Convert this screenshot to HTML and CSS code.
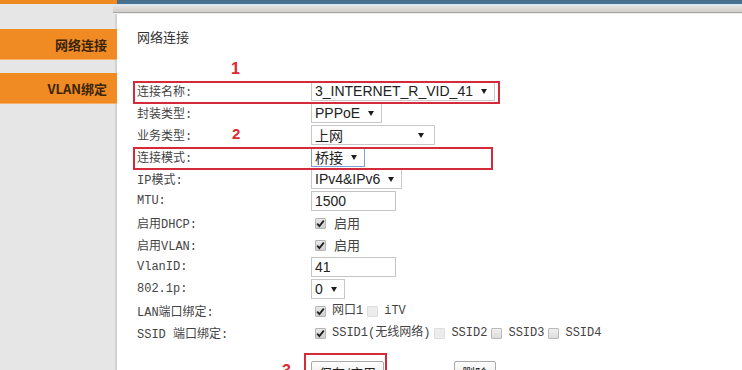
FILE: index.html
```html
<!DOCTYPE html>
<html lang="zh-CN">
<head>
<meta charset="utf-8">
<title>网络连接</title>
<link rel="stylesheet" href="styles.css">
</head>
<body>
<div class="page">
  <aside class="sidebar">
    <div class="side-top"></div>
    <nav class="side-nav">
      <div class="side-item">网络连接</div>
      <div class="side-item">VLAN绑定</div>
    </nav>
  </aside>
  <main class="main">
    <div class="topbar">
      <div class="topbar-blue"></div>
      <div class="topbar-grad"></div>
    </div>
    <div class="content">
      <h1 class="title">网络连接</h1>
      <div class="form-wrap">
        <div class="form">
          <div class="lbl">连接名称:</div>
          <div class="ctl"><span class="sel">3_INTERNET_R_VID_41<i class="caret"></i></span></div>

          <div class="lbl">封装类型:</div>
          <div class="ctl"><span class="sel">PPPoE<i class="caret"></i></span></div>

          <div class="lbl">业务类型:</div>
          <div class="ctl"><span class="sel sel-wide cjk">上网<i class="caret"></i></span></div>

          <div class="lbl">连接模式:</div>
          <div class="ctl"><span class="sel sel-focus cjk">桥接<i class="caret"></i></span></div>

          <div class="lbl">IP模式:</div>
          <div class="ctl"><span class="sel">IPv4&amp;IPv6<i class="caret"></i></span></div>

          <div class="lbl">MTU:</div>
          <div class="ctl"><span class="inp">1500</span></div>

          <div class="lbl">启用DHCP:</div>
          <div class="ctl"><span class="cb on"><svg viewBox="0 0 11 11" width="11" height="11"><path d="M2.2 5.6 L4.4 8 L8.8 2.6" /></svg></span><span class="cb-text sans">启用</span></div>

          <div class="lbl">启用VLAN:</div>
          <div class="ctl"><span class="cb on"><svg viewBox="0 0 11 11" width="11" height="11"><path d="M2.2 5.6 L4.4 8 L8.8 2.6" /></svg></span><span class="cb-text sans">启用</span></div>

          <div class="lbl">VlanID:</div>
          <div class="ctl"><span class="inp">41</span></div>

          <div class="lbl">802.1p:</div>
          <div class="ctl"><span class="sel">0<i class="caret"></i></span></div>

          <div class="lbl">LAN端口绑定:</div>
          <div class="ctl"><span class="cb on"><svg viewBox="0 0 11 11" width="11" height="11"><path d="M2.2 5.6 L4.4 8 L8.8 2.6" /></svg></span><span class="cb-text">网口1</span><span class="cb off dis"></span><span class="cb-text">iTV</span></div>

          <div class="lbl">SSID 端口绑定:</div>
          <div class="ctl"><span class="cb on"><svg viewBox="0 0 11 11" width="11" height="11"><path d="M2.2 5.6 L4.4 8 L8.8 2.6" /></svg></span><span class="cb-text">SSID1(无线网络)</span><span class="cb off dis"></span><span class="cb-text">SSID2</span><span class="cb off"></span><span class="cb-text">SSID3</span><span class="cb off"></span><span class="cb-text">SSID4</span></div>
        </div>

        <div class="actions">
          <button class="btn" type="button">保存/应用</button>
          <button class="btn" type="button">删除</button>
        </div>

        <div class="mark mark-box box1"></div>
        <div class="mark mark-num num1">1</div>
        <div class="mark mark-num num2">2</div>
        <div class="mark mark-box box2"></div>
        <div class="mark mark-box box3"></div>
        <div class="mark mark-num num3">3</div>
      </div>
    </div>
  </main>
</div>
</body>
</html>
```
FILE: styles.css
```css
* { box-sizing: border-box; }

html, body {
  margin: 0;
  padding: 0;
  background: #fff;
}

body {
  width: 742px;
  height: 370px;
  overflow: hidden;
  font-family: "Liberation Sans", "Noto Sans CJK SC", sans-serif;
  color: #333;
}

.page {
  display: flex;
  height: 370px;
}

/* ---------- sidebar ---------- */
.sidebar {
  width: 117px;
  flex: none;
  background: #e6e6e6;
  box-shadow: inset -2px 0 0 #d3d3d3;
}

.side-top {
  height: 4px;
  background: #ef8a1f;
}

.side-nav {
  display: flex;
  flex-direction: column;
  gap: 13px;
  padding-top: 25px;
}

.side-item {
  height: 31px;
  line-height: 31px;
  background: #f08a22;
  border-bottom: 1px solid #f6b16a;
  text-align: right;
  padding-right: 10px;
  font-family: "Noto Sans CJK SC", sans-serif;
  font-weight: bold;
  font-size: 13px;
  color: #3b2408;
}

/* ---------- main ---------- */
.main {
  flex: 1;
  min-width: 0;
}

.topbar-blue {
  height: 4px;
  background: #48718f;
}

.topbar-grad {
  height: 10px;
  background: linear-gradient(
    #dbe8f1 0, #dbe8f1 2px,
    #e4e1de 2px, #d2cdc9 8px,
    #a5a5a5 8px, #a5a5a5 9px,
    #ececec 9px);
  margin-left: -4px;
  border-top-left-radius: 3px;
}

.content {
  padding: 14px 0 0 20px;
}

.title {
  margin: 0;
  font-family: "Noto Sans CJK SC", sans-serif;
  font-weight: normal;
  font-size: 13px;
  line-height: 18px;
  color: #333;
}

.form-wrap {
  position: relative;
  margin-top: 34px;
}

.form {
  display: grid;
  grid-template-columns: 174px auto;
  grid-auto-rows: 22px;
  align-items: center;
}

.lbl {
  font-family: "Liberation Mono", "Noto Sans CJK SC", monospace;
  font-size: 12px;
  color: #444;
  white-space: pre;
}

.ctl {
  display: flex;
  align-items: center;
  font-family: "Liberation Mono", "Noto Sans CJK SC", monospace;
  font-size: 12px;
  color: #444;
}

/* select-like boxes */
.sel {
  display: inline-flex;
  align-items: center;
  gap: 8px;
  height: 20px;
  padding: 0 7px 0 3px;
  border: 1px solid #c8c8c8;
  background: #fff;
  font-family: "Liberation Sans", "Noto Sans CJK SC", sans-serif;
  font-size: 14px;
  color: #222;
  white-space: nowrap;
}

.sel.cjk {
  font-family: "Noto Sans CJK SC", sans-serif;
  font-size: 14px;
}

.sel-wide {
  width: 124px;
  justify-content: space-between;
  padding-right: 10px;
}

.sel-focus {
  border-color: #7f9fd6;
}

.caret {
  display: inline-block;
  width: 0;
  height: 0;
  border-left: 3px solid transparent;
  border-right: 3px solid transparent;
  border-top: 5px solid #1e1e1e;
}

.inp {
  display: inline-flex;
  align-items: center;
  width: 85px;
  height: 20px;
  padding-left: 3px;
  border: 1px solid #c4c4c4;
  font-family: "Liberation Sans", sans-serif;
  font-size: 14px;
  color: #222;
}

/* checkboxes */
.cb {
  display: inline-flex;
  width: 11px;
  height: 11px;
  flex: none;
  margin-left: 4px;
  margin-right: 6px;
  border: 1px solid #b4b4b4;
  border-radius: 1px;
  background: linear-gradient(#e9e9e9, #cfcfcf);
}

.cb svg {
  display: block;
  margin: -1px;
  fill: none;
  stroke: #1f1f1f;
  stroke-width: 1.8;
}

.cb.off {
  background: linear-gradient(#f0f0f0, #dcdcdc);
  border-color: #b9b9b9;
}

.cb.dis {
  background: #ececec;
  border-color: #dedede;
}

.cb-text {
  white-space: pre;
  line-height: 14px;
}

.cb-text.sans {
  font-family: "Noto Sans CJK SC", sans-serif;
  font-size: 13px;
  margin-left: 2px;
}

/* buttons */
.actions {
  display: flex;
  gap: 70px;
  padding-left: 174px;
  margin-top: 17px;
}

.btn {
  height: 23px;
  padding: 0 7px;
  border: 1px solid #a9a9a9;
  border-radius: 2px;
  background: linear-gradient(#fdfdfd, #e6e6e6);
  font-family: "Noto Sans CJK SC", sans-serif;
  font-size: 13px;
  color: #222;
  line-height: 20px;
}

/* red annotations (overlay) */
.mark {
  position: absolute;
}

.mark-box {
  border: 2px solid #d52a3a;
}

.box1 { left: -4px; top: 1px; width: 367px; height: 23px; }
.box2 { left: -4px; top: 67px; width: 360px; height: 23px; }
.box3 { left: 167px; top: 273px; width: 83px; height: 30px; }

.mark-num {
  font-family: "Liberation Sans", sans-serif;
  font-weight: bold;
  color: #e0262f;
}

.num1 { left: 94px; top: -19px; font-size: 16px; line-height: 16px; }
.num2 { left: 95px; top: 46px; font-size: 15px; line-height: 15px; }
.num3 { left: 145px; top: 283px; font-size: 16px; line-height: 16px; }
```
